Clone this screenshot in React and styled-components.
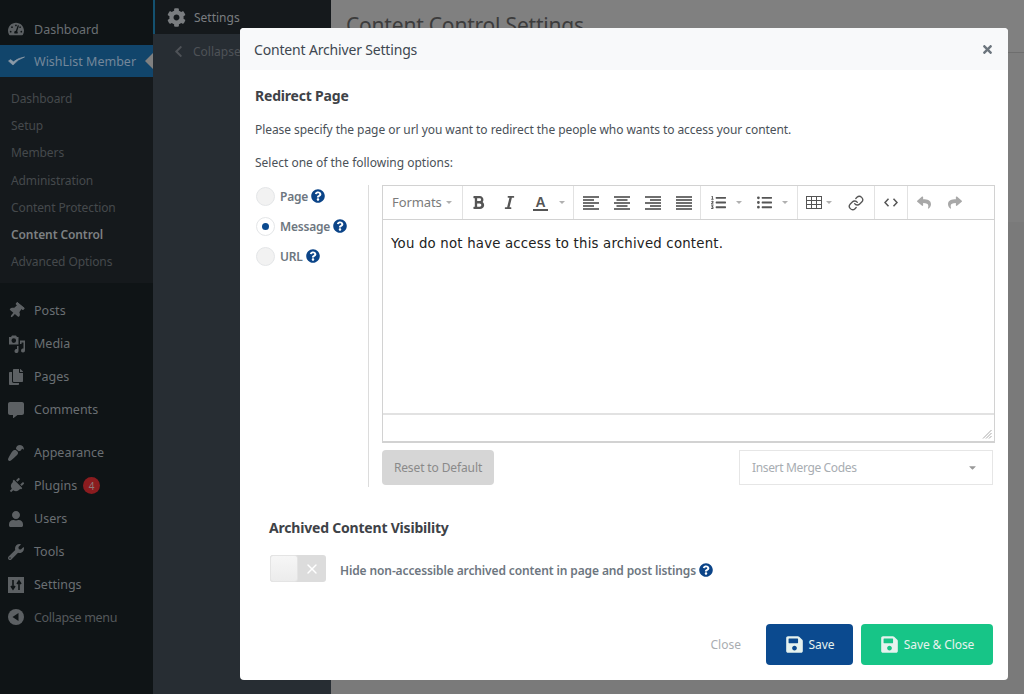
import React from 'react';
import styled, { createGlobalStyle } from 'styled-components';
import {
  FaTachometerAlt, FaThumbtack, FaCopy, FaCommentAlt, FaPaintBrush, FaPlug, FaUser, FaWrench, FaCog, FaChevronLeft, FaQuestionCircle, FaBold, FaItalic, FaListOl, FaListUl, FaReply, FaShare, FaSave, FaTimes, FaCaretDown,
} from 'react-icons/fa';
import { Link as LinkIcon, X as ThinX } from 'lucide-react';

const sans = `"Noto Sans", "Open Sans", sans-serif`;

const Global = createGlobalStyle`
  html, body { margin: 0; padding: 0; height: 100%; background: #808080; overflow: hidden; }
  #root { height: 100%; }
  * { box-sizing: border-box; }
  body { font-family: ${sans}; }
`;

const Page = styled.div`
  position: relative;
  display: flex;
  width: 1024px;
  height: 694px;
  overflow: hidden;
`;
const Sidebar = styled.nav`
  width: 153px;
  flex: none;
  background: #0f1416;
  padding-top: 13px;
`;
const Row = styled.div`
  display: flex;
  align-items: center;
  height: ${p => p.$h || 33}px;
  padding-left: 8px;
  background: ${p => p.$active ? '#11456b' : 'transparent'};
  color: ${p => p.$active ? '#74879a' : p.$dim ? '#55595c' : '#6a6f73'};
  letter-spacing: ${p => p.$dim ? -0.3 : 0}px;
  font-size: 12.5px;
  position: relative;
`;
const IconBox = styled.span`
  width: 26px;
  flex: none;
  display: flex;
  align-items: center;
  color: ${p => p.$active ? '#8b9aa8' : '#5c6063'};
  font-size: 16px;
  svg { transform: rotate(${p => p.$rot || 0}deg); }
`;
const Arrow = styled.span`
  position: absolute;
  right: 0;
  top: 8px;
  border: 8px solid transparent;
  border-right-color: #808080;
  border-left-width: 0;
`;
const Badge = styled.span`
  display: inline-flex;
  align-items: center;
  justify-content: center;
  margin-left: 6px;
  width: 17px;
  height: 17px;
  border-radius: 50%;
  background: #8b1c1f;
  color: #8d7a7a;
  font-size: 10px;
`;
const Sub = styled.div`
  background: #15191c;
  padding: 8px 0;
`;
const SubItem = styled.div`
  height: 27.2px;
  line-height: 27px;
  padding-left: 11px;
  font-size: 12px;
  letter-spacing: -0.1px;
  color: ${p => p.$current ? '#7d8082' : '#45494c'};
  font-weight: ${p => p.$current ? 600 : 400};
`;
const Spacer = styled.div`
  height: ${p => p.$h || 10}px;
`;
const SecondPanel = styled.div`
  width: 178px;
  flex: none;
  background: #272d33;
`;
const PanelTop = styled.div`
  height: 34px;
  display: flex;
  align-items: center;
  gap: 8px;
  padding-left: 12px;
  background: #15191c;
  border-left: 2px solid #14516f;
  color: #7a7d80;
  font-size: 12px;
`;
const PanelCollapse = styled.div`
  height: 34px;
  display: flex;
  align-items: center;
  gap: 8px;
  padding-left: 19px;
  color: #4e5257;
  font-size: 12px;
`;
const Main = styled.main`
  flex: 1;
  background: #7a7a7a;
  display: flex;
  flex-direction: column;
`;
const MainHead = styled.div`
  height: 53px;
  flex: none;
  background: #808080;
  border-bottom: 1px solid #6e6e6e;
  padding: 11px 15px;
`;
const MainBand = styled.div`
  height: 169px;
  flex: none;
  background: #7e7e7e;
`;
const MainTitle = styled.h1`
  margin: 0;
  font-size: 21px;
  font-weight: 400;
  letter-spacing: -0.2px;
  color: #3c3c3c;
  white-space: nowrap;
`;
const Modal = styled.section`
  position: absolute;
  left: 240px;
  top: 28px;
  width: 768px;
  height: 652px;
  display: flex;
  flex-direction: column;
  background: #fff;
  border-radius: 4px;
`;
const ModalHead = styled.header`
  height: 42px;
  flex: none;
  display: flex;
  align-items: center;
  justify-content: space-between;
  padding: 0 14px;
  background: #f8f9fa;
  border-radius: 4px 4px 0 0;
  color: #3e4750;
  font-size: 14px;
  letter-spacing: -0.17px;
`;
const CloseX = styled.span`
  display: flex;
  color: #6c757d;
  font-size: 13px;
`;
const Body = styled.div`
  flex: 1;
  display: flex;
  flex-direction: column;
  padding: 16px 15px 0;
`;
const SectionTitle = styled.h3`
  margin: 0;
  font-size: 14px;
  line-height: 20px;
  font-weight: 700;
  letter-spacing: -0.2px;
  color: #3e4247;
  padding-left: ${p => p.$inset || 0}px;
`;
const Para = styled.p`
  margin: ${p => p.$top}px 0 0;
  font-size: 12px;
  line-height: 18px;
  letter-spacing: ${p => p.$ls || 0}px;
  color: #4a5158;
`;
const Columns = styled.div`
  display: flex;
  margin-top: 13px;
`;
const Options = styled.div`
  width: 114px;
  flex: none;
  border-right: 1px solid #dcdcdc;
  height: 302px;
  display: flex;
  flex-direction: column;
  gap: 8px;
`;
const Opt = styled.label`
  height: 22px;
  display: flex;
  align-items: center;
  color: #6d7680;
  font-size: 12px;
  font-weight: 600;
  letter-spacing: -0.2px;
`;
const Radio = styled.span`
  width: 19px;
  height: 19px;
  border-radius: 50%;
  border: 1px solid #e4e6e8;
  background: ${p => p.$on ? '#fff' : '#f2f2f2'};
  margin-left: 1px;
  margin-right: 5px;
  display: flex;
  align-items: center;
  justify-content: center;
  &::after {
    content: '';
    display: ${p => p.$on ? 'block' : 'none'};
    width: 7px;
    height: 7px;
    border-radius: 50%;
    background: #0b4a8f;
  }
`;
const Help = styled.span`
  display: inline-flex;
  margin-left: 3px;
  color: #0b4488;
  font-size: 14px;
`;
const EditorCol = styled.div`
  flex: 1;
  padding-left: 13px;
`;
const Editor = styled.div`
  width: 613px;
  height: 258px;
  border: 1px solid #d2d2d2;
  border-bottom-width: 2px;
  display: flex;
  flex-direction: column;
`;
const Toolbar = styled.div`
  height: 34px;
  flex: none;
  display: flex;
  border-bottom: 1px solid #d2d2d2;
`;
const TGroup = styled.div`
  display: flex;
  align-items: center;
  flex: none;
  width: ${p => p.$w}px;
  padding-left: ${p => p.$pl || 0}px;
  border-right: ${p => p.$last ? 'none' : '1px solid #e2e2e2'};
  color: ${p => p.$muted ? '#a8a8a8' : '#555'};
  font-size: 15px;
`;
const Tool = styled.span`
  width: ${p => p.$w}px;
  margin-left: ${p => p.$ml || 0}px;
  flex: none;
  display: flex;
  justify-content: center;
  align-items: center;
`;
const Formats = styled.span`
  font-size: 13px;
  letter-spacing: -0.1px;
  padding-bottom: 2px;
  color: #7b7b7b;
`;
const Caret = styled.span`
  width: 0;
  height: 0;
  flex: none;
  border: 3.5px solid transparent;
  border-top-color: #b0b0b0;
  border-bottom-width: 0;
  margin-left: ${p => p.$ml || 0}px;
`;
const UnderA = styled.span`
  font-size: 14px;
  line-height: 14px;
  font-weight: 700;
  padding: 0 2px;
  border-bottom: 2px solid #555;
  font-family: "Liberation Sans", sans-serif;
`;
const Content = styled.div`
  flex: 1;
  padding: 14px 8px;
  font-family: "DejaVu Sans", sans-serif;
  font-size: 13.3px;
  letter-spacing: 0.2px;
  line-height: 20px;
  color: #222;
  white-space: nowrap;
`;
const Status = styled.div`
  height: 28px;
  flex: none;
  border-top: 2px solid #e2e2e2;
  display: flex;
  justify-content: flex-end;
  align-items: flex-end;
  padding: 0 2px 2px 0;
  color: #a8a8a8;
`;
const EditorFoot = styled.div`
  display: flex;
  justify-content: space-between;
  margin-top: 7px;
  width: 611px;
`;
const ResetBtn = styled.button`
  width: 112px;
  height: 35px;
  border: none;
  border-radius: 4px;
  background: #d6d6d6;
  color: #8a8a8a;
  font: 400 12px ${sans};
  letter-spacing: -0.12px;
`;
const MergeSelect = styled.div`
  width: 254px;
  height: 35px;
  border: 1px solid #e6e6e6;
  display: flex;
  align-items: center;
  justify-content: space-between;
  padding: 0 14px 0 12px;
  color: #a8adb2;
  font-size: 12px;
  letter-spacing: -0.35px;
`;
const Visibility = styled.div`
  margin-top: 31px;
`;
const ToggleRow = styled.div`
  display: flex;
  align-items: center;
  margin-top: 17px;
  padding-left: 14px;
  color: #6d7680;
  font-size: 12px;
  font-weight: 600;
  letter-spacing: -0.12px;
`;
const ToggleLabel = styled.span`
  display: flex;
  align-items: center;
  margin-top: 3px;
`;
const Toggle = styled.span`
  width: 56px;
  height: 27px;
  flex: none;
  display: flex;
  margin-left: 1px;
  margin-right: 14px;
  border-radius: 3px;
  background: #dcdcdc;
  color: #fff;
`;
const Knob = styled.span`
  width: 28px;
  height: 27px;
  border-radius: 3px;
  background: linear-gradient(#f6f6f6, #ececec);
  border: 1px solid #e4e4e4;
`;
const ToggleX = styled.span`
  flex: 1;
  display: flex;
  align-items: center;
  justify-content: center;
`;
const Footer = styled.footer`
  margin-top: auto;
  padding-bottom: 15px;
  display: flex;
  justify-content: flex-end;
  align-items: center;
  gap: 8px;
`;
const CloseLink = styled.span`
  color: #a9adb1;
  font-size: 12px;
  margin-right: 17px;
`;
const Btn = styled.button`
  height: 41px;
  width: ${p => p.$w}px;
  border: none;
  border-radius: 4px;
  background: ${p => p.$bg};
  color: #e6f2ee;
  font: 400 12px ${sans};
  letter-spacing: -0.1px;
  display: flex;
  align-items: center;
  justify-content: center;
  gap: 5px;
  svg { font-size: 19px; }
`;

const TickIcon = () => (
  <svg width="17" height="10" viewBox="0 0 17 10"><path d="M0.5 5 L5 9 Q 10 3 16.5 1 Q 10 2 5.5 5.8 L2.5 3.6 Z" fill="currentColor" stroke="currentColor" strokeWidth="0.7" /></svg>
);
const MediaIcon = () => (
  <svg width="18" height="18" viewBox="0 0 18 18" fill="currentColor">
    <path d="M1 2h2l1-1.500h4l1 1.500h1.500v7.500H1z M5.800 3.300a2.300 2.300 0 1 0 0 4.600a2.300 2.300 0 0 0 0-4.600z" fillRule="evenodd" />
    <path d="M12 5.500h5v10a2 2 0 1 1-1.500-1.900V7.500h-2V9h-1.500z" />
    <path d="M10.500 11v5a2 2 0 1 1-1.500-1.900V11z" />
  </svg>
);
const SlidersIcon = () => (
  <svg width="16" height="16" viewBox="0 0 16 16">
    <rect width="16" height="16" fill="currentColor" />
    <path d="M5 3v8M3 9l2 3 2-3M11 13V5M9 7l2-3 2 3" stroke="#0f1416" strokeWidth="1.600" fill="none" />
  </svg>
);
const CollapseIcon = () => (
  <svg width="16" height="16" viewBox="0 0 16 16">
    <circle cx="8" cy="8" r="8" fill="currentColor" />
    <path d="M10.500 4v8L4.500 8z" fill="#0f1416" />
  </svg>
);
const AlignIcon = ({ mode }) => {
  const rows = [16, mode === 'j' ? 16 : 11, 16, mode === 'j' ? 16 : 11, 16];
  return (
    <svg width="16" height="14" viewBox="0 0 16 14" stroke="currentColor" strokeWidth="1.700">
      {rows.map((w, i) => {
        const x = mode === 'c' ? (16 - w) / 2 : mode === 'r' ? 16 - w : 0;
        return <line key={i} x1={x} x2={x + w} y1={1 + i * 3} y2={1 + i * 3} />;
      })}
    </svg>
  );
};
const TableIcon = () => (
  <svg width="16" height="13" viewBox="0 0 16 13" fill="none" stroke="currentColor" strokeWidth="1">
    <rect x=".5" y=".5" width="15" height="12" />
    <path d="M.5 4.500h15M.5 8.500h15M5.500 .5v12M10.500 .5v12" />
  </svg>
);
const CodeIcon = () => (
  <svg width="14" height="9" viewBox="0 0 14 9" fill="none" stroke="currentColor" strokeWidth="1.500">
    <path d="M4.500 .8L1 4.500l3.500 3.700M9.500 .8L13 4.500 9.500 8.200" />
  </svg>
);
const GripIcon = () => (
  <svg width="10" height="10" viewBox="0 0 10 10" stroke="currentColor" strokeWidth="1">
    <path d="M9.500 1L1 9.500M9.500 4L4 9.500M9.500 7L7 9.500" />
  </svg>
);

const main = [
  [FaThumbtack, 'Posts', 0, 40], [MediaIcon, 'Media'], [FaCopy, 'Pages'], [FaCommentAlt, 'Comments'],
];
const second = [
  [FaPaintBrush, 'Appearance', 0, 180], [FaPlug, 'Plugins', 4, 45], [FaUser, 'Users'], [FaWrench, 'Tools'], [SlidersIcon, 'Settings'],
];
const sub = ['Dashboard', 'Setup', 'Members', 'Administration', 'Content Protection', 'Content Control', 'Advanced Options'];

function MenuRows({ items }) {
  return items.map(([I, label, badge, rot]) => (
    <Row key={label}>
      <IconBox $rot={rot}><I /></IconBox>{label}{badge ? <Badge>{badge}</Badge> : null}
    </Row>
  ));
}

export default function App() {
  return (
    <Page>
      <Global />
      <Sidebar>
        <Row $h={32}><IconBox><FaTachometerAlt /></IconBox>Dashboard</Row>
        <Row $active $h={32}><IconBox $active><TickIcon /></IconBox>WishList Member<Arrow /></Row>
        <Sub>
          {sub.map(s => <SubItem key={s} $current={s === 'Content Control'}>{s}</SubItem>)}
        </Sub>
        <Spacer $h={11} />
        <MenuRows items={main} />
        <Spacer />
        <MenuRows items={second} />
        <Row $dim $h={32}><IconBox><CollapseIcon /></IconBox>Collapse menu</Row>
      </Sidebar>
      <SecondPanel>
        <PanelTop><FaCog size={19} />Settings</PanelTop>
        <PanelCollapse><FaChevronLeft size={13} />Collapse</PanelCollapse>
      </SecondPanel>
      <Main>
        <MainHead><MainTitle>Content Control Settings</MainTitle></MainHead>
        <MainBand />
      </Main>
      <Modal>
        <ModalHead>Content Archiver Settings<CloseX><FaTimes /></CloseX></ModalHead>
        <Body>
          <SectionTitle>Redirect Page</SectionTitle>
          <Para $top={15} $ls={-0.06}>Please specify the page or url you want to redirect the people who wants to access your content.</Para>
          <Para $top={15}>Select one of the following options:</Para>
          <Columns>
            <Options>
              <Opt><Radio />Page<Help><FaQuestionCircle /></Help></Opt>
              <Opt><Radio $on />Message<Help><FaQuestionCircle /></Help></Opt>
              <Opt><Radio />URL<Help><FaQuestionCircle /></Help></Opt>
            </Options>
            <EditorCol>
              <Editor>
                <Toolbar>
                  <TGroup $w={80} $pl={9}><Formats>Formats</Formats><Caret $ml={4} /></TGroup>
                  <TGroup $w={111}>
                    <Tool $w={31}><FaBold /></Tool>
                    <Tool $w={31}><FaItalic /></Tool>
                    <Tool $w={31}><UnderA>A</UnderA></Tool>
                    <Caret $ml={2.5} />
                  </TGroup>
                  <TGroup $w={127} $pl={1}>
                    <Tool $w={31}><AlignIcon mode="l" /></Tool>
                    <Tool $w={31}><AlignIcon mode="c" /></Tool>
                    <Tool $w={31}><AlignIcon mode="r" /></Tool>
                    <Tool $w={31}><AlignIcon mode="j" /></Tool>
                  </TGroup>
                  <TGroup $w={97}>
                    <Tool $w={16} $ml={9}><FaListOl /></Tool>
                    <Caret $ml={9.5} />
                    <Tool $w={16} $ml={15}><FaListUl /></Tool>
                    <Caret $ml={9.5} />
                  </TGroup>
                  <TGroup $w={77}>
                    <Tool $w={16} $ml={8}><TableIcon /></Tool>
                    <Caret $ml={3.5} />
                    <Tool $w={16} $ml={16}><LinkIcon size={16} strokeWidth={2} /></Tool>
                  </TGroup>
                  <TGroup $w={33}>
                    <Tool $w={14} $ml={9}><CodeIcon /></Tool>
                  </TGroup>
                  <TGroup $w={68} $muted $last>
                    <Tool $w={14} $ml={9}><FaReply /></Tool>
                    <Tool $w={14} $ml={17}><FaShare /></Tool>
                  </TGroup>
                </Toolbar>
                <Content>You do not have access to this archived content.</Content>
                <Status><GripIcon /></Status>
              </Editor>
              <EditorFoot>
                <ResetBtn>Reset to Default</ResetBtn>
                <MergeSelect>Insert Merge Codes<FaCaretDown size={11} color="#999" /></MergeSelect>
              </EditorFoot>
            </EditorCol>
          </Columns>
          <Visibility>
            <SectionTitle $inset={14}>Archived Content Visibility</SectionTitle>
            <ToggleRow>
              <Toggle><Knob /><ToggleX><ThinX size={16} strokeWidth={2} /></ToggleX></Toggle>
              <ToggleLabel>
                Hide non-accessible archived content in page and post listings
                <Help><FaQuestionCircle /></Help>
              </ToggleLabel>
            </ToggleRow>
          </Visibility>
          <Footer>
            <CloseLink>Close</CloseLink>
            <Btn $w={87} $bg="#0b4a8f"><FaSave />Save</Btn>
            <Btn $w={132} $bg="#17c587"><FaSave />Save &amp; Close</Btn>
          </Footer>
        </Body>
      </Modal>
    </Page>
  );
}
